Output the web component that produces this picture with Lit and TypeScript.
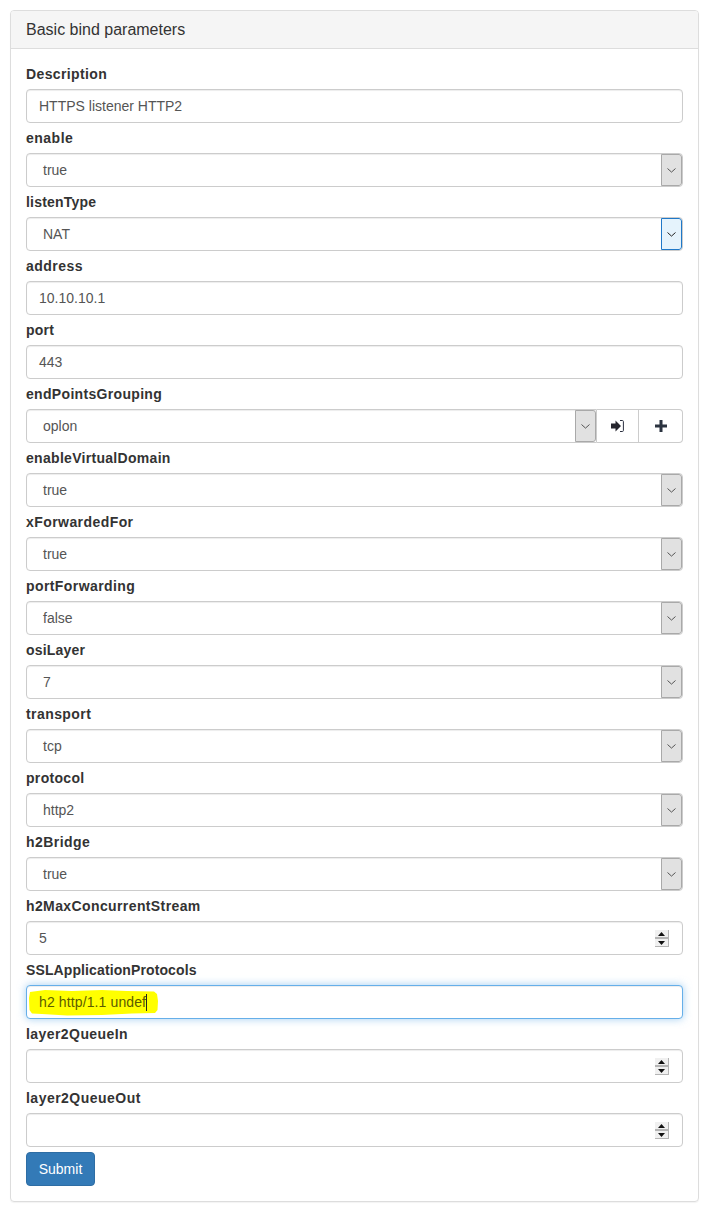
import { LitElement, html, css, svg } from "lit";
import { customElement } from "lit/decorators.js";

type Field = { label: string; kind: "text" | "select" | "group" | "number" | "focus"; value?: string; active?: boolean; track?: number };

const FIELDS: Field[] = [
  { label: "Description", kind: "text", value: "HTTPS listener HTTP2", track: 0.38 },
  { label: "enable", kind: "select", value: "true", track: 0.5 },
  { label: "listenType", kind: "select", value: "NAT", active: true, track: 0.2 },
  { label: "address", kind: "text", value: "10.10.10.1", track: 0.48 },
  { label: "port", kind: "text", value: "443", track: 0.2 },
  { label: "endPointsGrouping", kind: "group", value: "oplon", track: 0.32 },
  { label: "enableVirtualDomain", kind: "select", value: "true", track: 0.3 },
  { label: "xForwardedFor", kind: "select", value: "true", track: 0.43 },
  { label: "portForwarding", kind: "select", value: "false", track: 0.41 },
  { label: "osiLayer", kind: "select", value: "7", track: 0.2 },
  { label: "transport", kind: "select", value: "tcp", track: 0.42 },
  { label: "protocol", kind: "select", value: "http2", track: 0.32 },
  { label: "h2Bridge", kind: "select", value: "true", track: 0.45 },
  { label: "h2MaxConcurrentStream", kind: "number", value: "5", track: 0.39 },
  { label: "SSLApplicationProtocols", kind: "focus", value: "h2 http/1.1 undef", track: 0.11 },
  { label: "layer2QueueIn", kind: "number", value: "", track: 0.43 },
  { label: "layer2QueueOut", kind: "number", value: "", track: 0.48 },
];

const chevron = svg`<svg width="9" height="5" viewBox="0 0 9 5" fill="none"><path d="M.5.5l4 3.6 4-3.6" stroke="currentColor" stroke-width="1"/></svg>`;

@customElement("app-root")
export class AppRoot extends LitElement {
  static styles = css`
    :host { display: block; width: 708px; height: 1212px; box-sizing: border-box; padding: 10px 9px 10px 10px; background: #fff; font-family: "Liberation Sans", Arial, sans-serif; font-size: 14px; line-height: 20px; color: #333; }
    * { box-sizing: border-box; }
    .panel { border: 1px solid #ddd; border-radius: 4px; height: 1192px; box-shadow: 0 1px 1px rgba(0,0,0,.05); }
    .head { height: 38px; padding: 10px 15px 0; background: #f5f5f5; border-bottom: 1px solid #ddd; border-radius: 3px 3px 0 0; font-size: 16px; line-height: 18px; color: #333; }
    .body { padding: 15px; display: flex; flex-direction: column; gap: 5px; }
    .field { display: flex; flex-direction: column; gap: 5px; }
    .label { font-weight: 700; height: 20px; }
    .ctl { position: relative; height: 34px; border: 1px solid #ccc; border-radius: 4px; background: #fff; color: #555; box-shadow: inset 0 1px 1px rgba(0,0,0,.075); display: flex; align-items: center; padding: 0 12px; line-height: 20px; overflow: hidden; }
    .ctl.sel { padding-left: 16px; }
    .ctl.focus { border-color: #66afe9; box-shadow: inset 0 1px 1px rgba(0,0,0,.075), 0 0 8px rgba(102,175,233,.6); overflow: visible; color: #5c5c00; }
    .val { position: relative; }
    .focus .val { letter-spacing: .12px; }
    .arrow { position: absolute; top: 0; right: 0; bottom: 0; width: 21px; background: #e1e1e1; border: 1px solid #a9a9a9; border-radius: 0 3px 3px 0; display: flex; align-items: center; justify-content: center; color: #555; }
    .arrow.active { background: #e5f3fc; border: 1px solid #1f78c8; color: #222; }
    .group { display: flex; height: 34px; }
    .group .ctl { flex: 1; border-radius: 4px 0 0 4px; }
    .btn { height: 34px; border: 1px solid #ccc; border-left: 0; background: #fff; display: flex; align-items: center; justify-content: center; color: #333; }
    .btn.login { width: 42px; }
    .btn.last { width: 44px; border-radius: 0 4px 4px 0; }
    .spin { position: absolute; right: 13px; top: 8px; width: 14px; height: 17px; background: #b4b4b4; display: flex; flex-direction: column; justify-content: space-between; align-items: center; padding: 0 1px 1px 0; }
    .spin span { width: 13px; height: 7px; background: #f0f0f0; display: flex; align-items: center; justify-content: center; }
    .mark { position: absolute; left: 0; top: 0; width: 135px; height: 34px; }
    .caret { display: inline-block; width: 1px; height: 17px; background: #222; vertical-align: -4px; margin-left: 0; position: relative; }
    .submit { align-self: flex-start; width: 69px; height: 34px; background: #337ab7; border: 1px solid #2e6da4; border-radius: 4px; color: #fff; display: flex; align-items: center; justify-content: center; }
  `;

  private selectCtl(f: Field) {
    return html`<div class="ctl sel"><span class="val">${f.value}</span><span class="arrow ${f.active ? "active" : ""}">${chevron}</span></div>`;
  }

  private control(f: Field) {
    switch (f.kind) {
      case "select":
        return this.selectCtl(f);
      case "group":
        return html`<div class="group">${this.selectCtl(f)}
          <div class="btn login"><svg width="13" height="12" viewBox="0 0 13 12"><path d="M0 3.500h4.500V.5L10 6l-5.500 5.500v-3H0z" fill="#26262e"/><path d="M9 .5h2.400c.6 0 1 .4 1 1v9c0 .6-.4 1-1 1H9" fill="none" stroke="#2b3040" stroke-width="1"/></svg></div>
          <div class="btn last"><svg width="12" height="12" viewBox="0 0 12 12"><path d="M4.500 0h3v4.500H12v3H7.500V12h-3V7.500H0v-3h4.500z" fill="#2b3340"/></svg></div>
        </div>`;
      case "number":
        return html`<div class="ctl"><span class="val">${f.value}</span>
          <span class="spin"><span><svg width="7" height="4" viewBox="0 0 7 4"><path d="M3.500 0L7 4H0z" fill="#111"/></svg></span><span><svg width="7" height="4" viewBox="0 0 7 4"><path d="M0 0h7L3.500 4z" fill="#111"/></svg></span></span></div>`;
      case "focus":
        return html`<div class="ctl focus">
          <svg class="mark" viewBox="0 0 135 34"><path d="M3 6 L18 4 L45 5 L75 4 L100 5 L127 5.500 L130 8 L131 15 L130.500 24 L128 27 L105 27.500 L75 29 L40 29.500 L15 28 L5 27.500 L2.500 24 L2 12 Z" fill="#ffff00"/></svg>
          <span class="val">${f.value}<span class="caret"></span></span></div>`;
      default:
        return html`<div class="ctl"><span class="val">${f.value}</span></div>`;
    }
  }

  render() {
    return html`<div class="panel">
      <div class="head">Basic bind parameters</div>
      <div class="body">
        ${FIELDS.map((f) => html`<div class="field"><div class="label" style="letter-spacing:${f.track ?? 0.3}px">${f.label}</div>${this.control(f)}</div>`)}
        <div class="submit">Submit</div>
      </div>
    </div>`;
  }
}
